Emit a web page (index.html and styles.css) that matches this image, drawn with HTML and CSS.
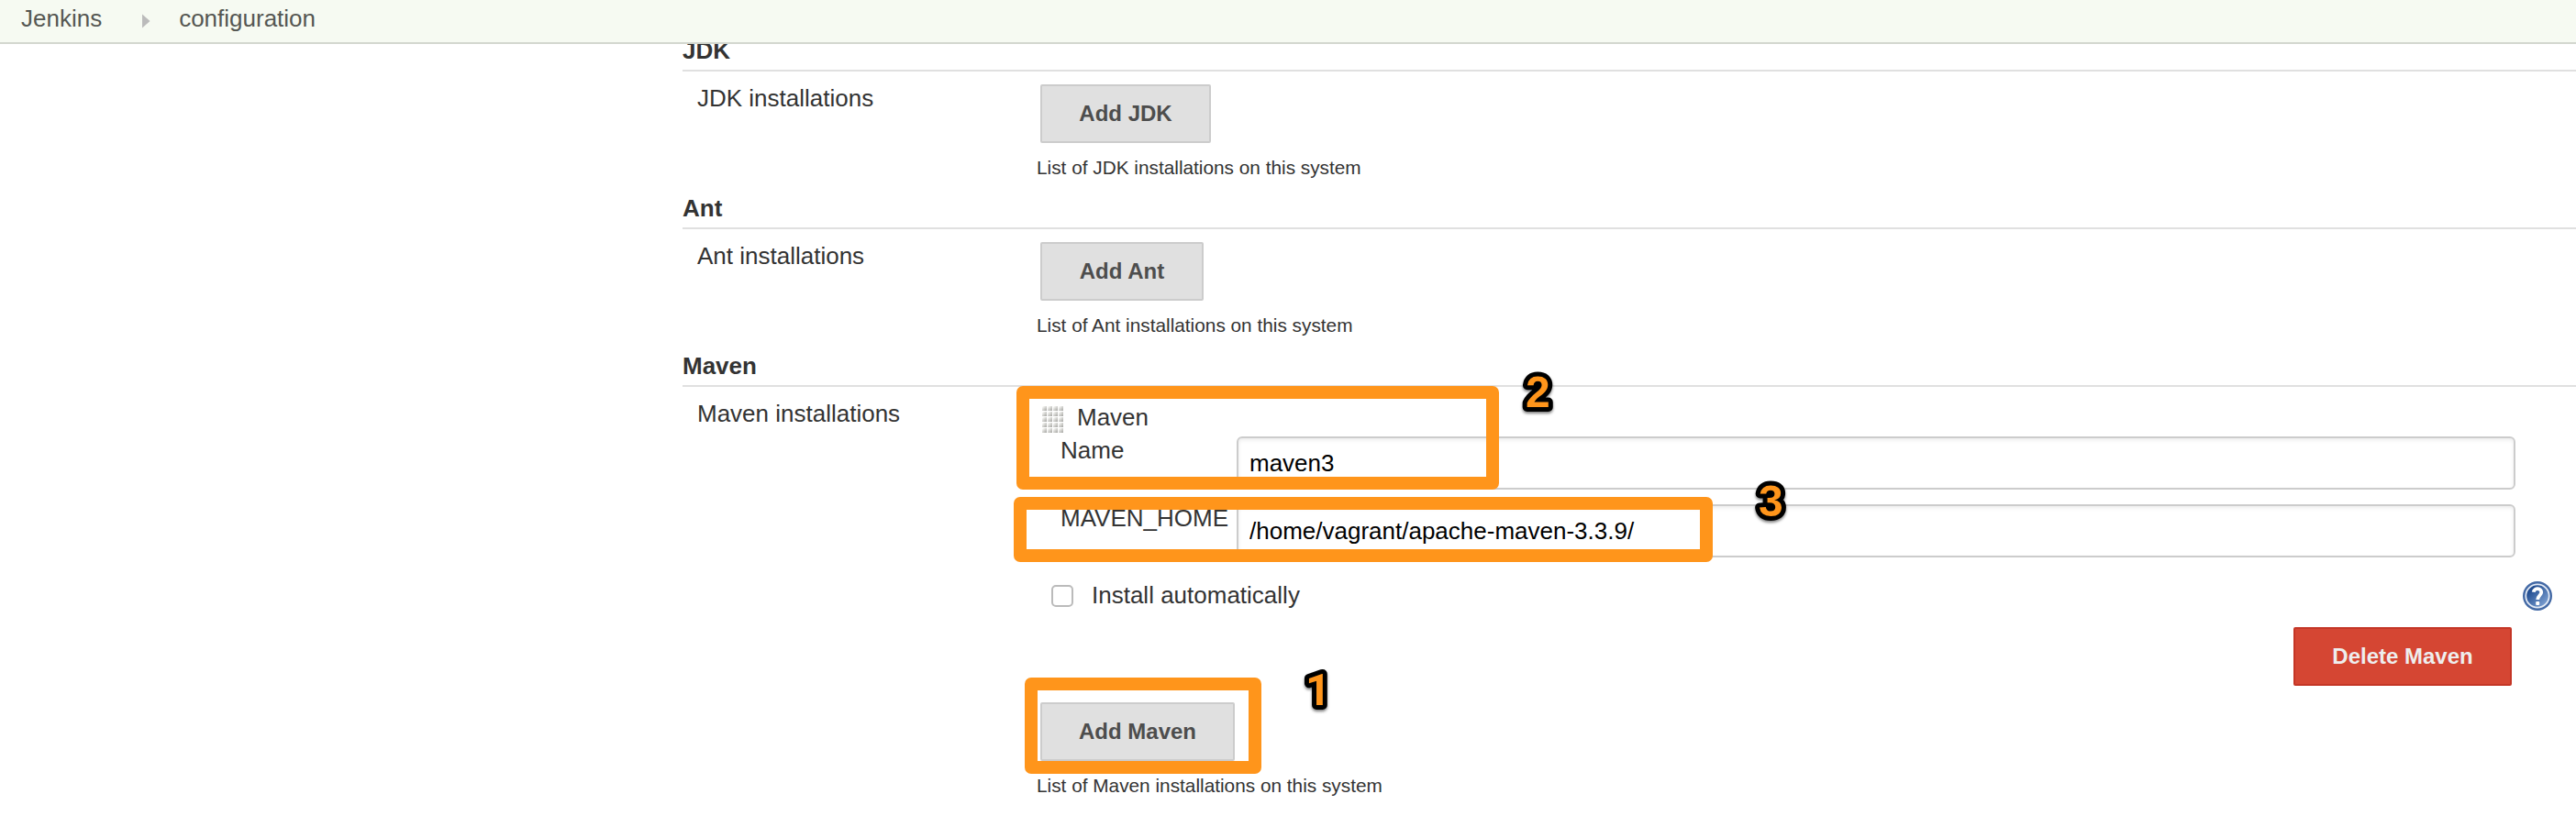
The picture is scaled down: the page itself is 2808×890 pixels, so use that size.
FILE: index.html
```html
<!DOCTYPE html>
<html lang="en">
<head>
<meta charset="utf-8">
<title>configuration [Jenkins]</title>
<link rel="stylesheet" href="styles.css">
</head>
<body>
<header class="breadcrumbs">
  <a class="crumb">Jenkins</a>
  <svg class="crumb-arrow" width="9" height="16" viewBox="0 0 9 16"><path d="M0 0.5 8.5 8 0 15.5Z" fill="#bbb"/></svg>
  <a class="crumb">configuration</a>
</header>
<main class="page">
  <section class="section">
    <h2 class="section-title">JDK</h2>
    <div class="row">
      <div class="label">JDK installations</div>
      <div class="setting">
        <button class="button add-jdk">Add JDK</button>
        <p class="description">List of JDK installations on this system</p>
      </div>
    </div>
  </section>
  <section class="section">
    <h2 class="section-title">Ant</h2>
    <div class="row">
      <div class="label">Ant installations</div>
      <div class="setting">
        <button class="button add-ant">Add Ant</button>
        <p class="description">List of Ant installations on this system</p>
      </div>
    </div>
  </section>
  <section class="section">
    <h2 class="section-title">Maven</h2>
    <div class="row">
      <div class="label">Maven installations</div>
      <div class="setting">
        <div class="installer">
          <div class="installer-head">
            <svg class="handle" width="23" height="29" viewBox="0 0 23 29">
              <defs>
                <linearGradient id="dot" x1="0" y1="0" x2="1" y2="1"><stop offset=".1" stop-color="#fafaf8"/><stop offset="1" stop-color="#a4a4a0"/></linearGradient>
                <pattern id="grip" width="6" height="6" patternUnits="userSpaceOnUse"><rect width="5" height="5" fill="url(#dot)"/></pattern>
              </defs>
              <rect width="23" height="29" fill="url(#grip)"/>
            </svg>
            <span>Maven</span>
          </div>
          <div class="field">
            <label class="field-label">Name</label>
            <input class="text-input" type="text" value="maven3">
          </div>
          <div class="field">
            <label class="field-label">MAVEN_HOME</label>
            <input class="text-input" type="text" value="/home/vagrant/apache-maven-3.3.9/">
          </div>
          <div class="auto">
            <span class="checkbox"></span>
            <span class="auto-label">Install automatically</span>
            <svg class="help" width="32" height="32" viewBox="0 0 32 32">
              <defs><linearGradient id="ball" x1="0" y1="0" x2="1" y2="1"><stop offset=".2" stop-color="#1f4b8f"/><stop offset="1" stop-color="#8fb0de"/></linearGradient></defs>
              <circle cx="16" cy="16" r="16" fill="#4369a5"/>
              <circle cx="16" cy="16" r="12.7" fill="url(#ball)" stroke="#e3eaf5" stroke-width="1.8"/>
              <path d="M11.7 11.8C12.4 6.7 20.6 7.2 20.2 12.2 20 15.4 16.2 15.8 16.2 20" fill="none" stroke="#fff" stroke-width="3.8"/>
              <rect x="14.2" y="22" width="4" height="4" rx="1" fill="#fff"/>
            </svg>
          </div>
          <div class="actions"><button class="button danger">Delete Maven</button></div>
        </div>
        <button class="button add-maven">Add Maven</button>
        <p class="description">List of Maven installations on this system</p>
      </div>
    </div>
  </section>
</main>
<div class="mark mark-name"></div>
<div class="mark mark-home"></div>
<div class="mark mark-add"></div>
<svg class="step step-two" width="50" height="60"><text x="10" y="46">2</text></svg>
<svg class="step step-three" width="50" height="60"><text x="10" y="46">3</text></svg>
<svg class="step step-one" width="50" height="60"><text x="10" y="46">1</text></svg>
</body>
</html>
```
FILE: styles.css
```css
* { box-sizing: border-box; }

body {
  position: relative;
  display: flex;
  flex-direction: column;
  height: 890px;
  margin: 0;
  overflow: hidden;
  background: #fff;
  color: #333;
  font: 26px/30px "Liberation Sans", Arial, Helvetica, sans-serif;
}

.breadcrumbs {
  display: flex;
  flex: none;
  align-items: center;
  height: 48px;
  padding: 0 0 6px 23px;
  border-bottom: 2px solid #d3d7cf;
  background: #f6faf2;
  color: #555753;
}

.crumb-arrow { margin: 5px 31px 0 44px; }

.page {
  flex: 1;
  min-height: 0;
  padding-left: 744px;
  overflow: hidden;
}

.section { height: 172px; }
.section:first-child { margin-top: -8px; }

.section-title {
  height: 38px;
  margin: 0;
  border-bottom: 2px solid #e0e0e0;
  font-size: 26px;
  line-height: 30px;
}

.row { display: flex; }

.label {
  flex: none;
  width: 386px;
  padding: 14px 0 0 16px;
}

.setting {
  display: flex;
  flex: 1;
  flex-direction: column;
  align-items: flex-start;
  padding-top: 14px;
}

.button {
  height: 64px;
  margin-left: 4px;
  padding: 0 0 1px;
  border: 2px solid #ccc;
  border-radius: 2px;
  background: #e0e0e0;
  color: #4d4d4d;
  font: bold 24px/28px "Liberation Sans", Arial, Helvetica, sans-serif;
  text-align: center;
}

.add-jdk { width: 186px; }
.add-ant { width: 178px; }
.add-maven { width: 212px; }

.danger {
  width: 238px;
  border-color: #c43626;
  background: #d54633;
  color: #eee;
}

.description {
  margin: 15px 0 0;
  font-size: 20.8px;
  line-height: 24px;
}

.installer {
  width: 100%;
  padding: 4px 0 18px;
}

.installer-head {
  display: flex;
  align-items: center;
  gap: 15px;
  height: 30px;
  padding-left: 6px;
}

.handle { margin-top: 4px; }

.field {
  display: flex;
  height: 58px;
  margin: 6px 66px 16px 26px;
}

.field-label {
  flex: none;
  width: 192px;
}

.text-input {
  flex: 1;
  height: 58px;
  padding: 0 12px;
  border: 2px solid #ccc;
  border-radius: 6px;
  background: #fff;
  box-shadow: inset 0 2px 4px rgba(0, 0, 0, 0.08);
  color: #000;
  font: 26px/30px "Liberation Sans", Arial, Helvetica, sans-serif;
}

.field + .field { margin-top: 0; }

.auto {
  display: flex;
  align-items: center;
  height: 32px;
  margin-top: 26px;
  padding: 0 26px 0 16px;
}

.checkbox {
  width: 24px;
  height: 24px;
  border: 2px solid #bbb;
  border-radius: 5px;
}

.auto-label { margin: -3px 0 0 20px; }
.help { margin-left: auto; }

.actions {
  display: flex;
  justify-content: flex-end;
  padding: 18px 70px 0 0;
}

/* Tutorial callouts drawn over the form */
.mark {
  position: absolute;
  border: 14px solid #ff951b;
  border-radius: 7px;
}

.mark-name { left: 1108px; top: 421px; width: 526px; height: 113px; }
.mark-home { left: 1105px; top: 542px; width: 762px; height: 71px; }
.mark-add { left: 1117px; top: 739px; width: 258px; height: 105px; }

.step {
  position: absolute;
  fill: #ff951b;
  stroke: #000;
  stroke-width: 10px;
  stroke-linejoin: round;
  paint-order: stroke fill;
  font-size: 48px;
  font-weight: bold;
  filter: drop-shadow(0 2px 1.5px rgba(0, 0, 0, 0.5));
}

.step-two { left: 1653px; top: 398px; }
.step-three { left: 1907px; top: 517px; }
.step-one { left: 1413px; top: 723px; font-family: Roboto, "Liberation Sans", sans-serif; }
```
